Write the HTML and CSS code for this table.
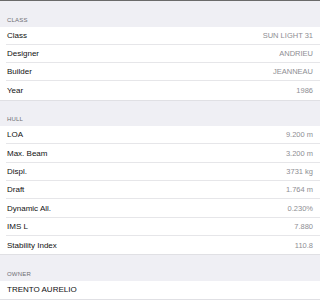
FILE: index.html
```html
<!DOCTYPE html>
<html lang="en">
<head>
  <meta charset="UTF-8">
  <title>Boat Details</title>
  <link rel="stylesheet" href="styles.css">
</head>
<body>

  <div class="details">
    <div class="section-title">CLASS</div>
    <div class="group">
      <div class="row"><span class="label">Class</span><span class="value">SUN LIGHT 31</span></div>
      <div class="row"><span class="label">Designer</span><span class="value">ANDRIEU</span></div>
      <div class="row"><span class="label">Builder</span><span class="value">JEANNEAU</span></div>
      <div class="row"><span class="label">Year</span><span class="value">1986</span></div>
    </div>

    <div class="section-title">HULL</div>
    <div class="group">
      <div class="row"><span class="label">LOA</span><span class="value">9.200 m</span></div>
      <div class="row"><span class="label">Max. Beam</span><span class="value">3.200 m</span></div>
      <div class="row"><span class="label">Displ.</span><span class="value">3731 kg</span></div>
      <div class="row"><span class="label">Draft</span><span class="value">1.764 m</span></div>
      <div class="row"><span class="label">Dynamic All.</span><span class="value">0.230%</span></div>
      <div class="row"><span class="label">IMS L</span><span class="value">7.880</span></div>
      <div class="row"><span class="label">Stability Index</span><span class="value">110.8</span></div>
    </div>

    <div class="section-title">OWNER</div>
    <div class="group">
      <div class="row"><span class="label">TRENTO AURELIO</span></div>
    </div>
  </div>

</body>
</html>
```

FILE: styles.css
```css
* {
  box-sizing: border-box;
  margin: 0;
  padding: 0;
}

body {
  width: 320px;
  height: 300px;
  overflow: hidden;
  background: #efeff4;
  font-family: 'Liberation Sans', Arial, sans-serif;
  border-top: 1px solid #6a6a6a;
}

.section-title {
  height: 25.5px;
  padding: 0 7px 4px;
  display: flex;
  align-items: flex-end;
  font-size: 6px;
  color: #6d6d72;
  letter-spacing: 0.2px;
}

.group {
  background: #fff;
  border-bottom: 1px solid #e0e0e4;
}

.row {
  height: 18.3px;
  margin-left: 6px;
  padding-right: 7px;
  display: flex;
  align-items: center;
  justify-content: space-between;
  border-bottom: 1px solid #e6e6e9;
}

.row:last-child {
  border-bottom: none;
}

.label {
  font-size: 8px;
  color: #111;
  padding-left: 1px;
}

.value {
  font-size: 7.5px;
  color: #8e8e93;
}
```
